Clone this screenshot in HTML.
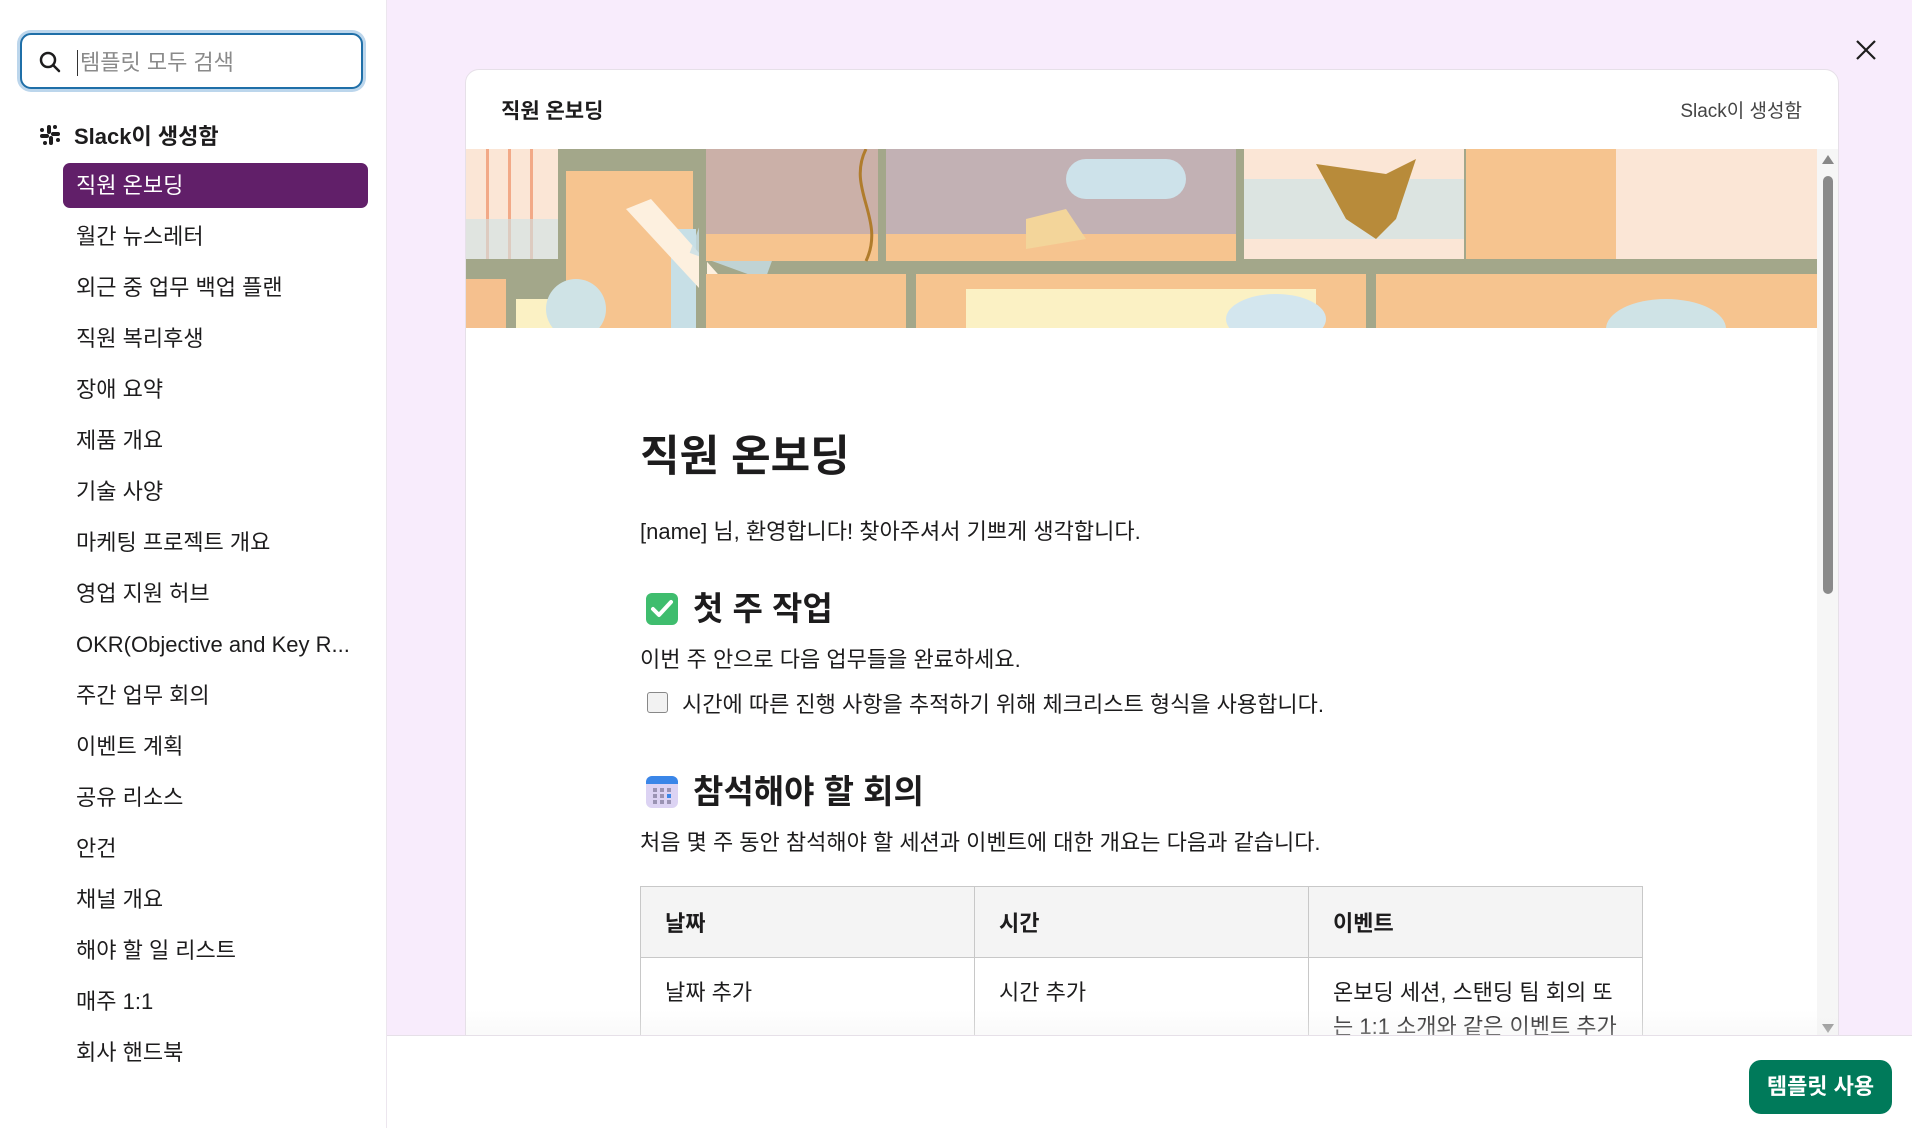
<!DOCTYPE html>
<html><head><meta charset="utf-8">
<style>
*{box-sizing:border-box;margin:0;padding:0}
body{width:1912px;height:1128px;overflow:hidden;background:#f8ecfc;font-family:"Liberation Sans","Noto Sans CJK KR",sans-serif;color:#1d1c1d;position:relative}
.side{position:absolute;left:0;top:0;width:387px;height:1128px;background:#fff;border-right:1px solid #ece6ee}
.search{position:absolute;left:17px;top:30px;width:349px;height:62px;border-radius:14px;background:#bcd6ec;padding:3px}
.search .in{width:100%;height:100%;border:2px solid #1f6fa8;border-radius:11px;background:#fff;position:relative}
.search .ph{position:absolute;left:55px;top:15px;font-size:22px;color:#8a8a8a;border-left:1.5px solid #333;padding-left:2px;line-height:26px}
.hdr{position:absolute;left:38px;top:119px;font-size:22px;font-weight:bold;display:flex;align-items:center;gap:12px}
.item{position:absolute;left:76px;font-size:22px;line-height:30px}
.sel{position:absolute;left:63px;top:163px;width:305px;height:45px;background:#611f69;border-radius:7px;color:#fff;font-size:22px;padding-left:13px;line-height:46px}
.card{position:absolute;left:465px;top:69px;width:1374px;height:1000px;background:#fff;border:1px solid #e6e0e8;border-radius:14px;overflow:hidden}
.ctitle{position:absolute;left:35px;top:25px;font-size:21px;font-weight:bold}
.cby{position:absolute;right:36px;top:26px;font-size:19px;color:#444}
.art{position:absolute;left:0;top:79px;width:1351px;height:179px}
.sb{position:absolute;left:1351px;top:79px;width:22px;height:900px;background:#f6f6f6}
h1{position:absolute;left:0;font-size:43px;white-space:nowrap;line-height:50px}
.p{position:absolute;left:0;font-size:22px;white-space:nowrap;color:#1d1c1d}
h2{position:absolute;left:5px;font-size:33px;white-space:nowrap;display:flex;align-items:center;gap:14px;line-height:40px}
table{position:absolute;left:0;width:1003px;border-collapse:collapse;font-size:22px}
td,th{border:1px solid #c8c8c8;text-align:left;padding:0 24px;vertical-align:top;width:334px}
th{background:#f4f4f4;height:71px;vertical-align:middle}
td{padding-top:18px;line-height:34px;height:120px}
.fade{position:absolute;left:0;top:940px;width:1374px;height:60px;background:linear-gradient(rgba(255,255,255,0),#f2f2f2)}
.foot{position:absolute;left:387px;top:1035px;width:1525px;height:93px;background:#fff;border-top:1px solid #e6e0e8}
.btn{position:absolute;left:1749px;top:1060px;width:143px;height:54px;background:#007a5a;border-radius:12px;color:#fff;font-weight:bold;font-size:22px;text-align:center;line-height:54px}
</style></head><body>
<div class="side">
 <div class="search"><div class="in">
  <svg style="position:absolute;left:16px;top:15px" width="24" height="24" viewBox="0 0 24 24"><circle cx="10" cy="10" r="7" fill="none" stroke="#1d1c1d" stroke-width="2.5"/><line x1="15" y1="15" x2="21" y2="21" stroke="#1d1c1d" stroke-width="2.5" stroke-linecap="round"/></svg>
  <div class="ph">템플릿 모두 검색</div></div></div>
 <div class="hdr"><svg width="24" height="24" viewBox="0 0 24 24" fill="#1d1c1d"><rect x="9" y="2" width="4" height="9" rx="2"/><rect x="11" y="13" width="4" height="9" rx="2"/><rect x="2" y="11" width="9" height="4" rx="2"/><rect x="13" y="9" width="9" height="4" rx="2"/><circle cx="4" cy="7" r="2"/><circle cx="20" cy="17" r="2"/><circle cx="17" cy="4" r="2"/><circle cx="7" cy="20" r="2"/></svg>Slack이 생성함</div>
 <div class="sel">직원 온보딩</div>
 <div class="item" style="top:222px">월간 뉴스레터</div>
 <div class="item" style="top:273px">외근 중 업무 백업 플랜</div>
 <div class="item" style="top:324px">직원 복리후생</div>
 <div class="item" style="top:375px">장애 요약</div>
 <div class="item" style="top:426px">제품 개요</div>
 <div class="item" style="top:477px">기술 사양</div>
 <div class="item" style="top:528px">마케팅 프로젝트 개요</div>
 <div class="item" style="top:579px">영업 지원 허브</div>
 <div class="item" style="top:630px">OKR(Objective and Key R...</div>
 <div class="item" style="top:681px">주간 업무 회의</div>
 <div class="item" style="top:732px">이벤트 계획</div>
 <div class="item" style="top:783px">공유 리소스</div>
 <div class="item" style="top:834px">안건</div>
 <div class="item" style="top:885px">채널 개요</div>
 <div class="item" style="top:936px">해야 할 일 리스트</div>
 <div class="item" style="top:987px">매주 1:1</div>
 <div class="item" style="top:1038px">회사 핸드북</div>
</div>
<svg style="position:absolute;left:1854px;top:38px" width="24" height="24" viewBox="0 0 24 24"><path d="M3 3L21 21M21 3L3 21" stroke="#1d1c1d" stroke-width="2.2"/></svg>
<div class="card">
 <div class="ctitle">직원 온보딩</div>
 <div class="cby">Slack이 생성함</div>
 <svg class="art" viewBox="0 0 1351 179" preserveAspectRatio="none">
  <rect width="1351" height="179" fill="#a3a78a"/>
  <rect x="0" y="0" width="92" height="110" fill="#fbe6d6"/>
  <g fill="#f2a987"><rect x="20" y="0" width="3" height="110"/><rect x="42" y="0" width="3" height="110"/><rect x="64" y="0" width="3" height="110"/></g>
  <rect x="0" y="70" width="92" height="40" fill="#cfe3e6" opacity=".6"/>
  <rect x="0" y="130" width="40" height="49" fill="#f5c08e"/>
  <rect x="50" y="150" width="60" height="29" fill="#fbf1c4"/>
  <rect x="100" y="22" width="127" height="157" fill="#f6c48f"/>
  <rect x="205" y="80" width="25" height="99" fill="#c7dfe6"/>
  <path d="M160 60 L270 179 L300 179 L185 50Z" fill="#fdf0df"/>
  <rect x="235" y="40" width="80" height="80" fill="#c7dfe6" opacity=".8" transform="rotate(20 275 80)"/>
  <rect x="233" y="0" width="8" height="179" fill="#a3a78a"/>
  <rect x="240" y="0" width="172" height="112" fill="#cbb0a8"/>
  <rect x="240" y="85" width="172" height="27" fill="#f6c48f"/>
  <path d="M400 0 C380 40 420 70 400 112" stroke="#b07c2c" stroke-width="3" fill="none"/>
  <rect x="412" y="0" width="8" height="179" fill="#a3a78a"/>
  <rect x="420" y="0" width="350" height="112" fill="#c2b1b4"/>
  <rect x="600" y="10" width="120" height="40" rx="20" fill="#cde2ea"/>
  <rect x="420" y="85" width="350" height="27" fill="#f6c48f"/>
  <path d="M560 70 L600 60 L620 90 L560 100Z" fill="#f3d59a"/>
  <rect x="770" y="0" width="8" height="179" fill="#a3a78a"/>
  <rect x="778" y="0" width="220" height="110" fill="#fbe6d6"/>
  <rect x="778" y="30" width="220" height="60" fill="#cfe3e6" opacity=".7"/>
  <path d="M850 15 L920 25 L950 10 L930 70 L910 90 L880 70Z" fill="#b88b3a"/>
  <rect x="1000" y="0" width="351" height="110" fill="#f6c48f"/>
  <rect x="1150" y="0" width="201" height="110" fill="#fbe6d6"/>
  <rect x="240" y="125" width="200" height="54" fill="#f6c48f"/>
  <rect x="450" y="125" width="450" height="54" fill="#f6c48f"/>
  <rect x="500" y="140" width="350" height="39" fill="#fbf1c4"/>
  <ellipse cx="810" cy="170" rx="50" ry="25" fill="#d3e6ee"/>
  <rect x="910" y="125" width="441" height="54" fill="#f6c48f"/>
  <rect x="1150" y="110" width="201" height="15" fill="#a3a78a"/>
  <ellipse cx="1200" cy="180" rx="60" ry="30" fill="#cfe3e6"/>
  <ellipse cx="110" cy="160" rx="30" ry="30" fill="#cfe3e6"/>
 </svg>
 <div class="sb"><svg style="position:absolute;left:5px;top:6px" width="12" height="9"><path d="M6 0L12 9H0Z" fill="#888"/></svg><div style="position:absolute;left:6px;top:27px;width:10px;height:418px;border-radius:5px;background:#8a8a8a"></div><svg style="position:absolute;left:5px;top:875px" width="12" height="9"><path d="M0 0H12L6 9Z" fill="#888"/></svg></div>
 <div style="position:absolute;left:174px;top:0">
  <h1 style="top:362px">직원 온보딩</h1>
  <div class="p" style="top:444px">[name] 님, 환영합니다! 찾아주셔서 기쁘게 생각합니다.</div>
  <h2 style="top:519px"><svg width="34" height="34" viewBox="0 0 34 34"><rect x="1" y="1" width="32" height="32" rx="6" fill="#3fbd6e"/><path d="M8 17L14 23L26 10" stroke="#fff" stroke-width="4" fill="none" stroke-linecap="round" stroke-linejoin="round"/></svg>첫 주 작업</h2>
  <div class="p" style="top:572px">이번 주 안으로 다음 업무들을 완료하세요.</div>
  <div style="position:absolute;left:7px;top:622px;width:21px;height:21px;border:1.5px solid #888;border-radius:3px;background:#f2f2f2"></div>
  <div class="p" style="left:42px;top:617px">시간에 따른 진행 사항을 추적하기 위해 체크리스트 형식을 사용합니다.</div>
  <h2 style="top:702px"><svg width="34" height="34" viewBox="0 0 34 34"><rect x="1" y="1" width="32" height="32" rx="6" fill="#dcd3f3"/><path d="M1 9V7a6 6 0 0 1 6-6h20a6 6 0 0 1 6 6v2Z" fill="#3a86e8"/><g fill="#9a93b3"><rect x="8" y="13" width="4" height="4"/><rect x="15" y="13" width="4" height="4"/><rect x="22" y="13" width="4" height="4"/><rect x="8" y="19" width="4" height="4"/><rect x="15" y="19" width="4" height="4"/><rect x="8" y="25" width="4" height="4"/><rect x="15" y="25" width="4" height="4"/><rect x="22" y="25" width="4" height="4"/></g><rect x="22" y="19" width="4" height="4" fill="#3a86e8"/></svg>참석해야 할 회의</h2>
  <div class="p" style="top:755px">처음 몇 주 동안 참석해야 할 세션과 이벤트에 대한 개요는 다음과 같습니다.</div>
  <table style="top:816px"><tr><th>날짜</th><th>시간</th><th>이벤트</th></tr>
  <tr><td>날짜 추가</td><td>시간 추가</td><td>온보딩 세션, 스탠딩 팀 회의 또는 1:1 소개와 같은 이벤트 추가</td></tr></table>
 </div>
 <div class="fade"></div>
</div>
<div class="foot"></div>
<div class="btn">템플릿 사용</div>
</body></html>
